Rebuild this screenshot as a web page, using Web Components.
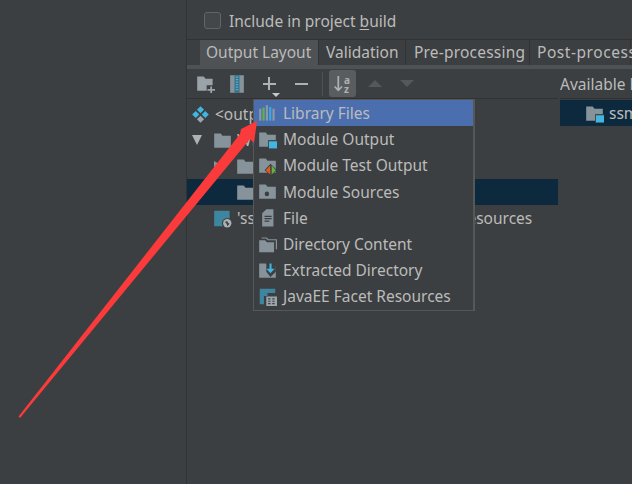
<!DOCTYPE html>
<html>
<head>
<meta charset="utf-8">
<title>Output Layout</title>
<style>
html,body{margin:0;height:100%;background:#3c3f41;overflow:hidden}
body{font:15.5px "Noto Sans",sans-serif;color:#bbbbbb}
</style>
</head>
<body>
<ide-window>
  <check-row label="Include in project build"></check-row>
  <tab-strip>
    <tab-item selected>Output Layout</tab-item>
    <tab-item w="87">Validation</tab-item>
    <tab-item w="124" ls=".2" pad="8">Pre-processing</tab-item>
    <tab-item w="101" ls=".55">Post-processing</tab-item>
  </tab-strip>
  <layout-body>
    <tool-bar slot="tools"></tool-bar>
    <tree-row slot="tree" icon="artifact" depth="0" text="&lt;output root&gt;"></tree-row>
    <tree-row slot="tree" icon="folder" depth="1" arrow="down" text="WEB-INF"></tree-row>
    <tree-row slot="tree" icon="folder" depth="2" arrow="right" text="classes"></tree-row>
    <tree-row slot="tree" icon="folder" depth="2" selected text="lib"></tree-row>
    <tree-row slot="tree" icon="web" depth="1" text="'ssm_web' module: 'Web' facet resources"></tree-row>
    <span slot="side-title">Available Elements</span>
    <tree-row slot="side" icon="module" depth="s" selected text="ssm"></tree-row>
  </layout-body>
</ide-window>
<popup-menu>
  <menu-item icon="library" active>Library Files</menu-item>
  <menu-item icon="module">Module Output</menu-item>
  <menu-item icon="test">Module Test Output</menu-item>
  <menu-item icon="sources">Module Sources</menu-item>
  <menu-item icon="file">File</menu-item>
  <menu-item icon="dir">Directory Content</menu-item>
  <menu-item icon="extract">Extracted Directory</menu-item>
  <menu-item icon="web2">JavaEE Facet Resources</menu-item>
</popup-menu>
<red-arrow></red-arrow>
<script>
const FOLDER = 'M1 2h5.500L8 4h7v10H1z'
const ICONS = {
  folder:`<path fill="#87939a" d="${FOLDER}"/>`,
  module:`<path fill="#87939a" d="${FOLDER}"/><rect x="8.500" y="8.500" width="7.500" height="7.500" fill="#3c3f41"/><rect x="9.200" y="9.500" width="6.800" height="6" fill="#40b6e0"/>`,
  test:`<path fill="#87939a" d="${FOLDER}"/><path fill="#3c3f41" d="M5.500 12l5-5.500 5.500 5.500-5 4.500z"/><path fill="#e05a1c" d="M10.300 8v7.500L6.500 12z"/><path fill="#62b543" d="M11.500 8v7.500L15 12z"/>`,
  sources:`<path fill="#87939a" d="${FOLDER}"/><circle cx="7.500" cy="10" r="1.900" fill="#3c3f41"/>`,
  file:`<path fill="#87939a" d="M3.500 4.500L7 1h6v14.500H3.500z"/><path fill="#3c3f41" d="M5.500 6.500h6v1h-6zM5.500 8.500h6v1h-6zM5.500 10.500h4v1h-4z"/>`,
  dir:`<path fill="#87939a" d="M1 4.500h5l1.500 1.500h6v8.500H1z"/><path fill="none" stroke="#87939a" d="M3 2.500h4l1.500 1.500h7v8"/>`,
  extract:`<path fill="#87939a" d="${FOLDER}"/><path fill="#3c3f41" d="M7 3h8v6l-4.500 4.500L7 9z"/><path fill="#40b6e0" d="M9.700 2h1.700v4.500H14l-3.500 3.800L7 6.500h2.700z"/>`,
  library:`<rect x="1" y="4" width="1.800" height="10" fill="#8d9aa3"/><rect x="3.800" y="3" width="1.800" height="11" fill="#62b543"/><rect x="6.600" y="1" width="1.800" height="13" fill="#8d9aa3"/><rect x="9.400" y="2.500" width="1.800" height="11.500" fill="#40a8e0"/><rect x="12.200" y="4" width="1.800" height="10" fill="#8d9aa3"/>`,
  web:`<path fill="#3e86a0" d="M1 1.500h13v13H1z"/><circle cx="12" cy="12" r="4.500" fill="#3c3f41"/><circle cx="12" cy="12" r="3.500" fill="#afb1b3"/><path fill="#3c3f41" d="M10 11l2-1 .5 1.500 1.500 1-2 2-.5-2z"/>`,
  web2:`<path fill="#3e86a0" d="M1.500 1.500h13v13h-13z"/><path fill="#3c3f41" d="M5 16V7.500h3V5h8.500v11z"/><rect x="7" y="8" width="9" height="8" fill="#9aa5ab"/><path fill="#3c3f41" d="M8.500 9.500h2v1h-2zM12 9.500h2v1h-2zM8.500 11.500h2v1h-2zM12 11.500h2v1h-2zM8.500 13.500h2v1h-2zM12 13.500h2v1h-2z"/>`,
  artifact:`<path fill="#40b6e0" d="M8 1l3 3-3 3-3-3zM12 5l3 3-3 3-3-3z"/><path fill="#40b6e0" d="M4 5l3 3-3 3-3-3z"/><path fill="#9aa7b0" d="M8 9l3 3-3 3-3-3z"/>`,
  addfolder:`<path fill="#9aa3a8" d="M1 2h5.500L8 4h6v5.500H9V14H1z"/><path fill="#9aa3a8" d="M12 10.500h1.500v2.200H16v1.500h-2.500V16.500H12v-2.300H9.600v-1.500H12z"/>`,
  zip:`<path fill="#87939a" d="M2.500 1H13.500V15H2.500z"/><path fill="#3a6f86" d="M6 1h4v14H6z"/><path fill="#40b6e0" d="M7 2h2v1H7zM7 4h2v1H7zM7 6h2v1H7zM7 8h2v1H7zM7 10h2v1H7zM7 12h2v1H7z"/>`,
  sort:`<path fill="#afb1b3" d="M4.200 1h1.600v11.500L8 10.300 9 11.400 5 15.500 1 11.400 2 10.300l2.200 2.200z"/>`
}
function svgIcon(name, size){
  return `<svg width="${size}" height="${size}" viewBox="0 0 16 16">${ICONS[name]}</svg>`
}
function esc(s){
  return s.replace(/&/g,'&amp;').replace(/</g,'&lt;')
}

class IdeWindow extends HTMLElement{
  constructor(){
    super();
    this.attachShadow({mode:'open'}).innerHTML = `
    <style>
    :host{display:grid;grid-template-columns:186px 1px 1fr;height:484px;background:#3c3f41}
    .line{background:#323232}
    main{display:flex;flex-direction:column;min-width:0;overflow:hidden}
    </style>
    <div></div><div class="line"></div>
    <main><slot></slot></main>`
  }
}

class CheckRow extends HTMLElement{
  constructor(){
    super();
    this.attachShadow({mode:'open'})
  }
  connectedCallback(){
    const label = this.getAttribute('label')
    const i = label.lastIndexOf('b')
    this.shadowRoot.innerHTML = `
    <style>
    :host{display:flex;align-items:center;height:38px;padding:3px 0 0 17px;gap:8px;box-sizing:border-box}
    .box{width:15px;height:15px;border:1px solid #646464;border-radius:3px;background:#43474a}
    u{text-underline-offset:2px}
    </style>
    <div class="box"></div>
    <span>${label.slice(0,i)}<u>b</u>${label.slice(i+1)}</span>`
  }
}

class TabStrip extends HTMLElement{
  constructor(){
    super();
    this.attachShadow({mode:'open'}).innerHTML = `
    <style>
    :host{display:block;border-top:1px solid #323232;box-sizing:border-box;height:30px;margin-top:1px}
    .tabs{display:flex;height:25px;padding-left:13px;overflow:hidden}
    .bar{height:4px;background:#4e5254}
    </style>
    <div class="tabs"><slot></slot></div><div class="bar"></div>`
  }
}

class TabItem extends HTMLElement{
  constructor(){
    super();
    this.attachShadow({mode:'open'})
  }
  connectedCallback(){
    const w = this.getAttribute('w') || 119
    const on = this.hasAttribute('selected')
    const pad = this.getAttribute('pad') || (on ? 6 : 7)
    const ls = this.getAttribute('ls') || 0
    this.shadowRoot.innerHTML = `
    <style>
    :host{display:block;flex:none;width:${w}px;box-sizing:border-box;padding:0 0 0 ${pad}px;line-height:25px;white-space:nowrap;
      letter-spacing:${ls}px;background:${on ? '#4e5254' : '#3c3f41'};border-right:1px solid #323232}
    </style>
    <slot></slot>`
  }
}

class LayoutBody extends HTMLElement{
  constructor(){
    super();
    this.attachShadow({mode:'open'}).innerHTML = `
    <style>
    :host{display:grid;grid-template-columns:371px 1fr;column-gap:2px;grid-template-rows:30px 1fr;flex:1}
    .tools{display:flex;align-items:center;border-bottom:1px solid #323232}
    .title{display:flex;align-items:center;white-space:nowrap;overflow:hidden;border-bottom:1px solid #323232}
    .tree{padding-top:2px}
    .side{padding-top:1px}
    </style>
    <div class="tools"><slot name="tools"></slot></div>
    <div class="title"><slot name="side-title"></slot></div>
    <div class="tree"><slot name="tree"></slot></div>
    <div class="side"><slot name="side"></slot></div>`
  }
}

class ToolBar extends HTMLElement{
  constructor(){
    super();
    this.attachShadow({mode:'open'}).innerHTML = `
    <style>
    :host{display:flex;align-items:center;height:29px;padding-left:2px;flex:1}
    .b{width:32px;height:27px;display:flex;align-items:center;justify-content:center;position:relative}
    .drop{position:absolute;left:19px;bottom:0;width:0;height:0;border:4px solid transparent;border-top-color:#c8c8c8;border-bottom:0}
    .sep{width:1px;height:24px;background:#4e5254;margin:0 6px 0 5px}
    .sort{width:27px;height:27px;margin-right:3px;background:#5a5d5f;border-radius:3px;position:relative;color:#afb1b3}
    .sort svg{position:absolute;left:4px;top:5px}
    .sort b{position:absolute;left:15px;font:bold 10px/10px "Noto Sans",sans-serif}
    .tri{width:32px;display:flex;justify-content:center}
    .tri i{width:0;height:0;border:7px solid transparent;border-top:0;border-bottom:7px solid #55585a}
    .tri.d i{border-bottom:0;border-top:7px solid #55585a}
    .mark{width:13px;height:2px;background:#afb1b3;position:relative}
    .mark.plus::after{content:"";position:absolute;left:5.500px;top:-5.500px;width:2px;height:13px;background:#afb1b3}
    </style>
    <div class="b">${svgIcon('addfolder',19)}</div>
    <div class="b">${svgIcon('zip',20)}</div>
    <div class="b"><div class="mark plus"></div><div class="drop"></div></div>
    <div class="b"><div class="mark"></div></div>
    <div class="sep"></div>
    <div class="sort">${svgIcon('sort',17)}<b style="top:5px">a</b><b style="top:14px">z</b></div>
    <div class="tri"><i></i></div>
    <div class="tri d"><i></i></div>`
  }
}

class TreeRow extends HTMLElement{
  constructor(){
    super();
    this.attachShadow({mode:'open'})
  }
  connectedCallback(){
    const depth = this.getAttribute('depth')
    const pad = {0:4,1:26,2:49,s:25}[depth]
    const arrow = this.getAttribute('arrow')
    const sel = this.hasAttribute('selected')
    const tri = arrow === 'down' ? '<i class="a down"></i>' : arrow === 'right' ? '<i class="a right"></i>' : ''
    this.shadowRoot.innerHTML = `
    <style>
    :host{display:flex;align-items:center;height:26px;padding-left:${pad}px;gap:5px;position:relative;white-space:nowrap;
      background:${sel ? '#0d293e' : 'transparent'}}
    .a{position:absolute;width:0;height:0}
    .down{left:5px;top:8px;border:5.500px solid transparent;border-top:10px solid #afb1b3;border-bottom:0}
    .right{left:27px;top:8px;border:5px solid transparent;border-left:9px solid #87939a;border-right:0}
    svg{flex:none}
    </style>
    ${tri}${svgIcon(this.getAttribute('icon'),19)}<span>${esc(this.getAttribute('text'))}</span>`
  }
}

class PopupMenu extends HTMLElement{
  constructor(){
    super();
    this.attachShadow({mode:'open'}).innerHTML = `
    <style>
    :host{position:absolute;left:253px;top:99px;width:222px;box-sizing:border-box;height:212px;
      background:#3c3f41;border:1px solid #555758;border-right-width:2px;display:block}
    </style>
    <slot></slot>`
  }
}

class MenuItem extends HTMLElement{
  constructor(){
    super();
    this.attachShadow({mode:'open'})
  }
  connectedCallback(){
    const active = this.hasAttribute('active')
    this.shadowRoot.innerHTML = `
    <style>
    :host{display:flex;align-items:center;height:26.200px;padding-left:4px;gap:6px;white-space:nowrap;
      background:${active ? '#4b6eaf' : 'transparent'}}
    svg{flex:none}
    </style>
    ${svgIcon(this.getAttribute('icon'),19)}<slot></slot>`
  }
}

class RedArrow extends HTMLElement{
  constructor(){
    super();
    this.attachShadow({mode:'open'}).innerHTML = `
    <style>:host{position:absolute;left:0;top:0;display:block;pointer-events:none}svg{display:block}</style>
    <svg width="632" height="484"><polygon fill="#fb3b3b" points="18.500,416.500 240,134 241,129 257,121 254,143 250,139 20,418"/></svg>`
  }
}

window.customElements.define('ide-window',IdeWindow)
window.customElements.define('check-row',CheckRow)
window.customElements.define('tab-strip',TabStrip)
window.customElements.define('tab-item',TabItem)
window.customElements.define('layout-body',LayoutBody)
window.customElements.define('tool-bar',ToolBar)
window.customElements.define('tree-row',TreeRow)
window.customElements.define('popup-menu',PopupMenu)
window.customElements.define('menu-item',MenuItem)
window.customElements.define('red-arrow',RedArrow)
</script>
</body>
</html>
